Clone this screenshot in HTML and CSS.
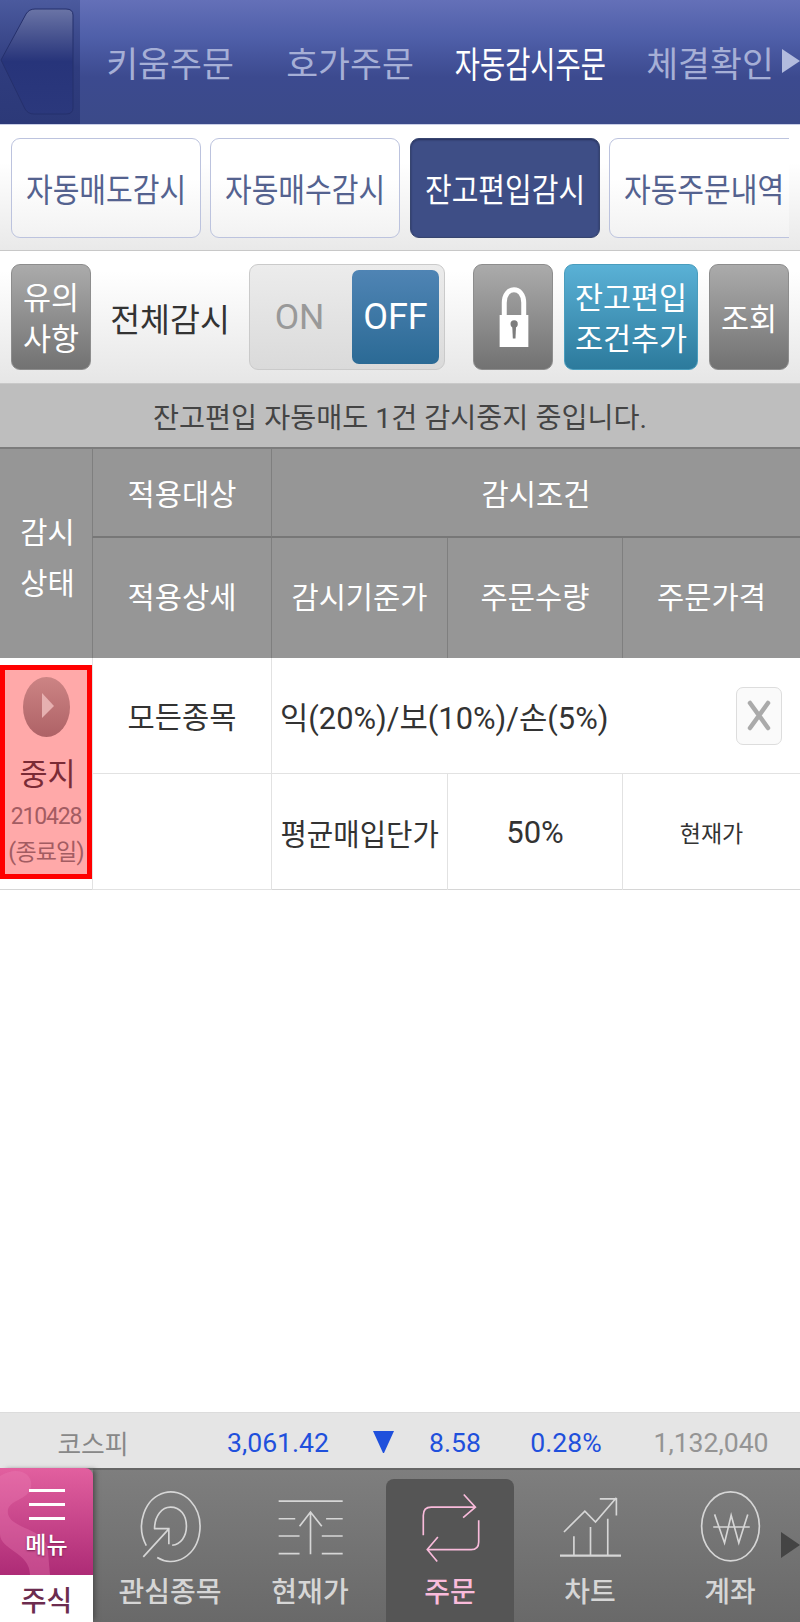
FILE: index.html
```html
<!DOCTYPE html>
<html lang="ko">

<head>
    <meta charset="utf-8">
    <title>자동감시주문</title>
    <link rel="stylesheet" href="styles.css">
</head>

<body>
    <div class="app">
        <div class="top-bar">
            <div class="back">
                <svg width="80" height="124" viewBox="0 0 80 124">
                    <defs>
                        <linearGradient id="backFill" x1="0" y1="0" x2="0" y2="1">
                            <stop offset="0" stop-color="#6a74a6" />
                            <stop offset="0.5" stop-color="#27347a" />
                            <stop offset="1" stop-color="#2b387c" />
                        </linearGradient>
                    </defs>
                    <path d="M1 60 L26 14 Q29 9 35 9 H66 Q73 9 73 15 V108 Q73 114 66 114 H34 Q28 114 25 109 Z" fill="url(#backFill)" stroke="#25306c" />
                </svg>
            </div>
            <div class="top-item">키움주문</div>
            <div class="top-item">호가주문</div>
            <div class="top-item on"><span class="squeeze">자동감시주문</span></div>
            <div class="top-item">체결확인</div>
            <div class="top-arrow"></div>
        </div>

        <div class="tabs">
            <div class="tabs-inner">
                <div class="tab"><span class="squeeze">자동매도감시</span></div>
                <div class="tab"><span class="squeeze">자동매수감시</span></div>
                <div class="tab on"><span class="squeeze">잔고편입감시</span></div>
                <div class="tab"><span class="squeeze">자동주문내역</span></div>
            </div>
        </div>

        <div class="toolbar">
            <div class="btn gray">유의<br>사항</div>
            <div class="all-label">전체감시</div>
            <div class="toggle">
                <div class="toggle-on">ON</div>
                <div class="toggle-off">OFF</div>
            </div>
            <div class="btn gray lock">
                <svg width="33" height="65" viewBox="290 105 100 195">
                    <path d="M298 195 H385 V292 H298 Z" fill="#fff" />
                    <path d="M312 200 V158 C312 105 371 105 371 158 V200" fill="none" stroke="#fff" stroke-width="15" />
                    <circle cx="342" cy="222" r="11" fill="#7d7d7d" />
                    <path d="M336 224 H348 L346 266 H338 Z" fill="#7d7d7d" />
                </svg>
            </div>
            <div class="btn blue">잔고편입<br>조건추가</div>
            <div class="btn gray">조회</div>
        </div>

        <div class="notice">잔고편입 자동매도 1건 감시중지 중입니다.</div>

        <div class="grid head">
            <div class="cell status-head">감시<br>상태</div>
            <div class="cell r1">적용대상</div>
            <div class="cell r1 wide">감시조건</div>
            <div class="cell r2">적용상세</div>
            <div class="cell r2">감시기준가</div>
            <div class="cell r2">주문수량</div>
            <div class="cell r2">주문가격</div>
        </div>

        <div class="grid body">
            <div class="status-cell">
                <div class="stopped">
                    <svg width="47" height="60" viewBox="0 0 47 60">
                        <defs>
                            <linearGradient id="playFill" x1="0" y1="0" x2="0" y2="1">
                                <stop offset="0" stop-color="#cc8484" />
                                <stop offset="1" stop-color="#ae6266" />
                            </linearGradient>
                        </defs>
                        <ellipse cx="23.5" cy="30" rx="23.5" ry="30" fill="url(#playFill)" />
                        <path d="M19 16 L31 29 L19 41 Z" fill="#e6b0b0" />
                    </svg>
                    <div class="stopped-name">중지</div>
                    <div class="stopped-date">210428</div>
                    <div class="stopped-note">(종료일)</div>
                </div>
            </div>
            <div class="cell">모든종목</div>
            <div class="cell wide left">
                <span class="rule-text">익(20%)/보(10%)/손(5%)</span>
                <div class="del">
                    <svg width="26" height="33" viewBox="0 0 26 33">
                        <path d="M4 4 L22 29 M22 4 L4 29" stroke="#aaa" stroke-width="4.5" stroke-linecap="round" />
                    </svg>
                </div>
            </div>
            <div class="cell"></div>
            <div class="cell"><span class="squeeze-sm">평균매입단가</span></div>
            <div class="cell pct">50%</div>
            <div class="cell small">현재가</div>
        </div>

        <div class="spacer"></div>

        <div class="index-bar">
            <div class="idx name">코스피</div>
            <div class="idx down">3,061.42</div>
            <div class="idx tri"></div>
            <div class="idx down">8.58</div>
            <div class="idx down">0.28%</div>
            <div class="idx vol">1,132,040</div>
        </div>

        <div class="nav">
            <div class="nav-home">
                <div class="menu-tile">
                    <svg class="swirl" width="93" height="107" viewBox="0 0 93 107">
                        <path d="M0 8 C20 -4 36 8 30 22 C24 34 6 32 8 46 C12 62 48 60 48 84 L50 107 H30 C30 84 0 82 0 66 Z" fill="#ea7fb4" opacity="0.35" />
                    </svg>
                    <div class="menu-bars"><i></i><i></i><i></i></div>
                    <div class="menu-label">메뉴</div>
                </div>
                <div class="home-label">주식</div>
            </div>
            <div class="nav-item">
                <svg class="nav-icon" viewBox="400 260 220 240">
                    <path d="M437 436 A88 105 0 1 1 470 472" />
                    <path d="M462 385 C462 345 485 320 510 320 C540 320 558 345 558 378 C558 410 540 432 515 435" />
                    <path d="M428 470 L503 388 M460 385 H505 V432" />
                </svg>
                <div class="nav-label">관심종목</div>
            </div>
            <div class="nav-item">
                <svg class="nav-icon" viewBox="818 260 220 240">
                    <path d="M832 302 H1025 M928 335 V462 M895 378 L928 335 L962 378" />
                    <path d="M832 355 H882 M832 407 H895 M832 460 H895 M975 355 H1025 M962 407 H1025 M962 460 H1025" />
                </svg>
                <div class="nav-label">현재가</div>
            </div>
            <div class="nav-item on">
                <svg class="nav-icon" viewBox="40 260 220 240">
                    <path d="M68 405 V345 Q68 320 92 320 H222 M190 282 L225 320 L188 352" />
                    <path d="M235 360 V425 Q235 448 212 448 H80 M112 410 L80 448 L110 484" />
                </svg>
                <div class="nav-label">주문</div>
            </div>
            <div class="nav-item">
                <svg class="nav-icon" viewBox="460 260 220 240">
                    <path d="M478 466 H662" stroke-width="7" />
                    <path d="M520 408 V466 M570 380 V466 M622 355 V466" />
                    <path d="M490 395 L553 332 L585 365 L648 292 M598 295 H648 V345" />
                </svg>
                <div class="nav-label">차트</div>
            </div>
            <div class="nav-item">
                <svg class="nav-icon" viewBox="880 260 220 240">
                    <ellipse cx="990" cy="378" rx="87" ry="104" />
                    <path d="M942 342 L972 428 L992 345 L1015 428 L1042 342 M938 380 H1048" />
                </svg>
                <div class="nav-label">계좌</div>
            </div>
            <div class="nav-arrow"></div>
        </div>
    </div>
</body>

</html>
```
FILE: styles.css
```css
* {
    box-sizing: border-box;
}

html,
body {
    margin: 0;
    background: #fff;
}

body {
    font-family: Roboto, 'Noto Sans CJK KR', sans-serif;
    color: #333;
}

.app {
    width: 800px;
    height: 1622px;
    display: flex;
    flex-direction: column;
    overflow: hidden;
}

.squeeze {
    display: inline-block;
    white-space: nowrap;
    transform: scaleX(.88);
}

.squeeze-sm {
    display: inline-block;
    white-space: nowrap;
    transform: scaleX(.97);
}

/* top bar */
.top-bar {
    position: relative;
    height: 125px;
    flex: none;
    display: flex;
    border-bottom: 1px solid #c9cee6;
    background: linear-gradient(#6470b8 0%, #4f5fa9 30%, #3c4a8f 62%, #3b4a89 100%);
}

.back {
    width: 80px;
    height: 124px;
    flex: none;
    background: linear-gradient(#4b5a9e, #2f3c7e 55%, #2c3978);
}

.back svg {
    display: block;
}

.top-item {
    width: 180px;
    display: flex;
    align-items: center;
    justify-content: center;
    font-size: 34.7px;
    color: #a6afd6;
    white-space: nowrap;
}

.top-item.on {
    color: #fff;
    font-size: 36px;
}

.top-item.on .squeeze {
    transform: scaleX(.76);
}

.top-arrow {
    position: absolute;
    right: 0;
    top: 49px;
    border-left: 18px solid #b2bbde;
    border-top: 12px solid transparent;
    border-bottom: 12px solid transparent;
}

/* tabs */
.tabs {
    height: 126px;
    flex: none;
    padding: 13px 11px 12px;
    background: linear-gradient(#fff 30%, #e9e9e9);
    border-bottom: 1px solid #c8c8c8;
}

.tabs-inner {
    display: flex;
    gap: 9.3px;
    height: 100px;
    overflow: hidden;
}

.tab {
    width: 190px;
    flex: none;
    display: flex;
    align-items: center;
    justify-content: center;
    font-size: 33px;
    color: #54628f;
    background: linear-gradient(#fff 40%, #f2f2f2);
    border: 1.5px solid #bcc3de;
    border-radius: 9px;
}

.tab.on {
    color: #fff;
    background: #3e4e86;
    border-color: #37456f;
    box-shadow: inset 0 1px 2px #26305a;
}

/* toolbar */
.toolbar {
    height: 132px;
    flex: none;
    display: flex;
    align-items: center;
    padding: 0 11px;
    background: linear-gradient(#fff 15%, #e6e6e6);
}

.btn {
    height: 106px;
    flex: none;
    display: flex;
    align-items: center;
    justify-content: center;
    padding-top: 4px;
    text-align: center;
    font-size: 30.5px;
    line-height: 41px;
    color: #fff;
    border-radius: 9px;
}

.btn.lock {
    padding-top: 0;
}

.btn.gray {
    width: 80px;
    background: linear-gradient(#ababab, #727272);
    border: 1px solid #8d8d8d;
}

.btn.blue {
    width: 134px;
    margin: 0 11px;
    background: linear-gradient(#5ab1d6, #2c7a9c);
    border: 1px solid #4a9dbd;
}

.all-label {
    width: 158px;
    flex: none;
    text-align: center;
    font-size: 32.5px;
}

.toggle {
    width: 196px;
    height: 106px;
    flex: none;
    display: flex;
    align-items: center;
    justify-content: space-between;
    padding: 0 5px 0 0;
    margin-right: 28px;
    background: linear-gradient(#ececec, #dadada);
    border: 1.5px solid #cacaca;
    border-radius: 9px;
}

.toggle-on {
    width: 99px;
    text-align: center;
    font-size: 35.5px;
    color: #999;
}

.toggle-off {
    width: 87px;
    height: 94px;
    display: flex;
    align-items: center;
    justify-content: center;
    font-size: 36px;
    color: #fff;
    background: linear-gradient(#4f84b4, #2b6a95);
    border-radius: 7px;
}

/* notice */
.notice {
    height: 66px;
    flex: none;
    display: flex;
    align-items: center;
    justify-content: center;
    font-size: 28.3px;
    color: #444;
    background: #bebebe;
    border-top: 1px solid #c9c9c9;
    border-bottom: 2px solid #7c7c7c;
}

/* table */
.grid {
    display: grid;
    flex: none;
    grid-template-columns: 92px 179px 176px 175px 178px;
}

.cell {
    display: flex;
    align-items: center;
    justify-content: center;
    font-size: 29.6px;
    white-space: nowrap;
}

.wide {
    grid-column: span 3;
}

.head {
    height: 209px;
    grid-template-rows: 89px 120px;
    background: #969696;
    color: #fff;
}

.head .cell {
    border-left: 1px solid #7f7f7f;
}

.head .r1 {
    border-bottom: 2px solid #777;
}

.head .r2 {
    padding-bottom: 6px;
}

.status-head.cell {
    grid-row: span 2;
    border-left: 0;
    padding: 10px 0 0 3px;
    text-align: center;
    line-height: 51px;
}

.body {
    height: 232px;
    grid-template-rows: 116px 116px;
    border-bottom: 1px solid #d6d6d6;
}

.body .cell {
    border-left: 1px solid #e2e2e2;
    border-bottom: 1px solid #e2e2e2;
}

.body .cell:nth-child(n+5) {
    border-bottom: 0;
}

.body .left {
    justify-content: space-between;
    padding: 0 18px 0 8px;
}

.rule-text {
    font-size: 30.8px;
}

.body .pct {
    font-size: 31px;
}

.body .small {
    font-size: 23px;
}

.status-cell {
    grid-row: span 2;
    padding: 7px 0 11px;
}

.stopped {
    height: 100%;
    width: 92px;
    display: flex;
    flex-direction: column;
    align-items: center;
    padding-top: 7px;
    background: #ffa9a9;
    border: 5px solid #f00;
    color: #a35c62;
}

.stopped svg {
    flex: none;
}

.stopped-name {
    margin-top: 17px;
    padding-left: 3px;
    font-size: 30.5px;
    line-height: 42px;
    color: #7a2b36;
}

.stopped-date {
    font-size: 23px;
    line-height: 42px;
    letter-spacing: -1.2px;
}

.stopped-note {
    font-size: 23px;
    line-height: 30px;
    white-space: nowrap;
    letter-spacing: -.8px;
}

.del {
    width: 46px;
    height: 58px;
    display: flex;
    align-items: center;
    justify-content: center;
    background: #fafafa;
    border: 1.5px solid #ddd;
    border-radius: 7px;
}

.spacer {
    flex: 1;
}

/* index bar */
.index-bar {
    height: 56px;
    flex: none;
    display: grid;
    grid-template-columns: 186px 184px 26px 118px 104px 182px;
    align-items: center;
    padding-top: 3px;
    background: #e5e5e5;
    border-top: 1px solid #dcdcdc;
    font-size: 26.6px;
}

.idx {
    text-align: center;
}

.idx.name {
    color: #888;
    font-size: 25.8px;
}

.idx.down {
    color: #1f50dc;
}

.idx.tri {
    width: 21px;
    height: 22px;
    margin: 0 auto;
    border-top: 22px solid #1f50dc;
    border-left: 10.5px solid transparent;
    border-right: 10.5px solid transparent;
}

.idx.vol {
    padding-left: 4px;
    color: #949494;
}

/* bottom nav */
.nav {
    position: relative;
    height: 154px;
    flex: none;
    display: flex;
    background: linear-gradient(#7e7e7e, #696969);
    border-top: 2px solid #666;
}

.nav-home {
    width: 93px;
    flex: none;
    margin-right: 7px;
    margin-top: -2px;
    display: flex;
    flex-direction: column;
    box-shadow: 4px 0 5px -2px #4b4b4b;
}

.menu-tile {
    position: relative;
    height: 107px;
    display: flex;
    flex-direction: column;
    align-items: center;
    overflow: hidden;
    background: linear-gradient(#e2609f, #ad2b76);
    border-top-right-radius: 8px;
}

.swirl {
    position: absolute;
    left: 0;
    top: 0;
}

.menu-bars {
    position: relative;
    width: 36px;
    margin-top: 21px;
    display: flex;
    flex-direction: column;
    gap: 11px;
}

.menu-bars i {
    display: block;
    height: 3px;
    background: #fff;
}

.menu-label {
    position: relative;
    margin-top: 11px;
    font-size: 23px;
    line-height: 30px;
    font-weight: 500;
    color: #fff;
    text-shadow: 0 1px 2px #7a1c50;
}

.home-label {
    height: 47px;
    display: flex;
    align-items: center;
    justify-content: center;
    font-size: 28px;
    font-weight: 500;
    color: #6c2c4f;
    background: #fff;
}

.nav-item {
    width: 128px;
    margin: 9px 6px 0;
    flex: none;
    display: flex;
    flex-direction: column;
    align-items: center;
    color: #d6d6d6;
    border-radius: 8px 8px 0 0;
}

.nav-item.on {
    color: #f9bbdb;
    background: #555;
}

.nav-icon {
    width: 73px;
    height: 80px;
    margin-top: 8px;
    flex: none;
    fill: none;
    stroke: currentColor;
    stroke-width: 5;
}

.nav-label {
    margin-top: 3px;
    font-size: 28px;
    line-height: 46px;
    font-weight: 500;
    white-space: nowrap;
}

.nav-arrow {
    position: absolute;
    right: 0;
    top: 62px;
    border-left: 19px solid #444;
    border-top: 13px solid transparent;
    border-bottom: 13px solid transparent;
}
```
